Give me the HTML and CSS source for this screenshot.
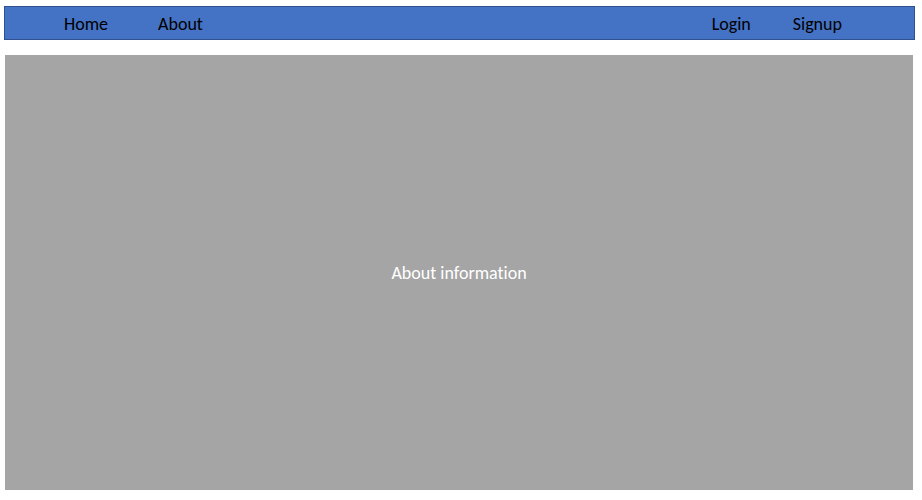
FILE: index.html
```html
<!DOCTYPE html>
<html lang="en">
<head>
<meta charset="utf-8">
<title>About</title>
<link rel="stylesheet" href="styles.css">
</head>
<body>
<nav class="navbar">
  <div class="group group-main">
    <a href="#home">Home</a>
    <a href="#about">About</a>
  </div>
  <div class="group group-account">
    <a href="#login">Login</a>
    <a href="#signup">Signup</a>
  </div>
</nav>
<main class="content">
  <p>About information</p>
</main>
</body>
</html>
```
FILE: styles.css
```css
* {
  box-sizing: border-box;
}

body {
  display: flex;
  flex-direction: column;
  gap: 15px;
  min-height: 100vh;
  margin: 0;
  padding: 6px 7px 10px 4px;
  background: #fff;
  font: 18px/22px Carlito, Calibri, Lato, sans-serif;
  font-variant-ligatures: none;
}

.navbar {
  display: flex;
  justify-content: space-between;
  padding: 6px 72px 4px 59px;
  border: 1px solid #2f528f;
  background: #4472c4;
}

.group {
  display: flex;
}

.group-main {
  gap: 50px;
}

.group-account {
  gap: 42px;
}

.navbar a {
  color: #000;
  text-decoration: none;
}

.content {
  display: flex;
  flex: 1;
  align-items: center;
  justify-content: center;
  margin: 0 2px 0 1px;
  background: #a5a5a5;
  color: #fff;
}

.content p {
  margin: 0;
}
```
